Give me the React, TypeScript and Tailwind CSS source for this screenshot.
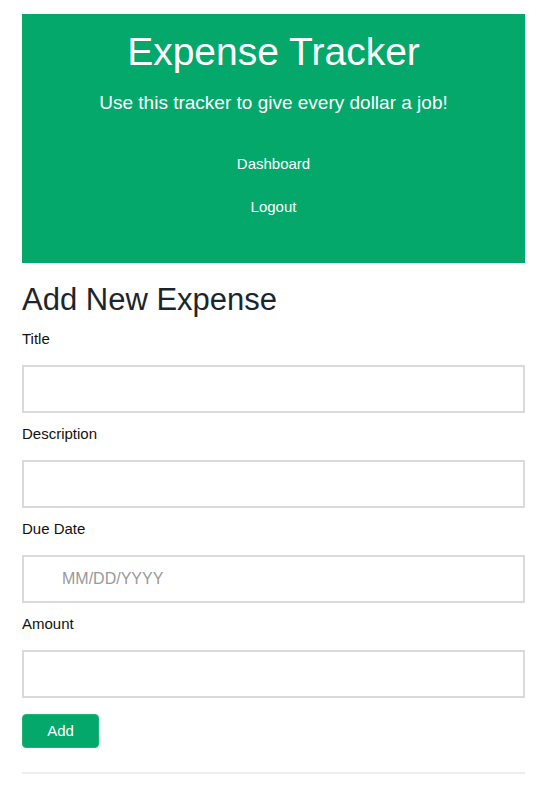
import React from 'react';

const fields = [
  { label: 'Title', placeholder: '' },
  { label: 'Description', placeholder: '' },
  { label: 'Due Date', placeholder: 'MM/DD/YYYY' },
  { label: 'Amount', placeholder: '' },
];

export default function App() {
  return (
    <div className="min-h-screen bg-white pl-[22px] pr-[25px] pt-[14px] font-['Liberation_Sans',Arial,sans-serif] text-[#111]">
      {/* Header */}
      <header className="bg-[#03a86a] text-white text-center pt-[14px] pb-[46px]">
        <h1 className="text-[39px] leading-[48px]">Expense Tracker</h1>
        <p className="mt-[15px] text-[19px] leading-[24px]">Use this tracker to give every dollar a job!</p>
        <nav className="mt-[39px] flex flex-col items-center gap-[23px] text-[15px] leading-[20px]">
          <a href="#">Dashboard</a>
          <a href="#">Logout</a>
        </nav>
      </header>

      {/* Form */}
      <form className="mt-[19px]" onSubmit={(e) => e.preventDefault()}>
        <h2 className="text-[31px] leading-[36px] text-[#1b262c]">Add New Expense</h2>
        {fields.map((f) => (
          <div key={f.label}>
            <label className="block mt-[11px] text-[15px] leading-[20px]">{f.label}</label>
            <input
              type="text"
              placeholder={f.placeholder}
              className={`mt-[16px] block w-full h-[48px] border-2 border-[#dadada] text-[16px] placeholder:text-[#999] outline-none ${f.placeholder ? 'pl-[38px]' : 'px-3'}`}
            />
          </div>
        ))}
        <button
          type="submit"
          className="mt-[16px] w-[77px] h-[34px] rounded-[4px] bg-[#03a86a] border border-[#1bb578] text-white text-[15px]"
        >
          Add
        </button>
      </form>
      <hr className="mt-[24px] border-t-2 border-[#eee]" />
    </div>
  );
}
